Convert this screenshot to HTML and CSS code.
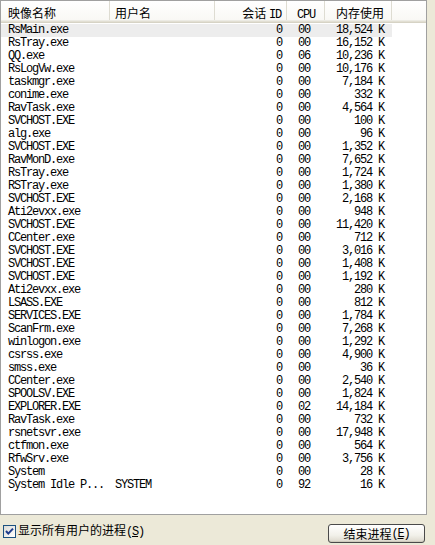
FILE: index.html
```html
<!DOCTYPE html>
<html>
<head>
<meta charset="utf-8">
<link rel="stylesheet" href="styles.css">
</head>
<body>
<div class="list">
  <div class="header">
    <div class="h h-name">映像名称</div>
    <div class="h h-user">用户名</div>
    <div class="h h-sess">会话 <span class="m">ID</span></div>
    <div class="h h-cpu"><span class="m">CPU</span></div>
    <div class="h h-mem">内存使用</div>
    <div class="h h-rest"></div>
  </div>
  <div class="rows m">
    <div class="row sel"><span class="name">RsMain.exe</span><span class="user"></span><span class="sess">0</span><span class="cpu">00</span><span class="mem">18,524 K</span></div>
    <div class="row"><span class="name">RsTray.exe</span><span class="user"></span><span class="sess">0</span><span class="cpu">00</span><span class="mem">16,152 K</span></div>
    <div class="row"><span class="name">QQ.exe</span><span class="user"></span><span class="sess">0</span><span class="cpu">06</span><span class="mem">10,236 K</span></div>
    <div class="row"><span class="name">RsLogVw.exe</span><span class="user"></span><span class="sess">0</span><span class="cpu">00</span><span class="mem">10,176 K</span></div>
    <div class="row"><span class="name">taskmgr.exe</span><span class="user"></span><span class="sess">0</span><span class="cpu">00</span><span class="mem">7,184 K</span></div>
    <div class="row"><span class="name">conime.exe</span><span class="user"></span><span class="sess">0</span><span class="cpu">00</span><span class="mem">332 K</span></div>
    <div class="row"><span class="name">RavTask.exe</span><span class="user"></span><span class="sess">0</span><span class="cpu">00</span><span class="mem">4,564 K</span></div>
    <div class="row"><span class="name">SVCHOST.EXE</span><span class="user"></span><span class="sess">0</span><span class="cpu">00</span><span class="mem">100 K</span></div>
    <div class="row"><span class="name">alg.exe</span><span class="user"></span><span class="sess">0</span><span class="cpu">00</span><span class="mem">96 K</span></div>
    <div class="row"><span class="name">SVCHOST.EXE</span><span class="user"></span><span class="sess">0</span><span class="cpu">00</span><span class="mem">1,352 K</span></div>
    <div class="row"><span class="name">RavMonD.exe</span><span class="user"></span><span class="sess">0</span><span class="cpu">00</span><span class="mem">7,652 K</span></div>
    <div class="row"><span class="name">RsTray.exe</span><span class="user"></span><span class="sess">0</span><span class="cpu">00</span><span class="mem">1,724 K</span></div>
    <div class="row"><span class="name">RSTray.exe</span><span class="user"></span><span class="sess">0</span><span class="cpu">00</span><span class="mem">1,380 K</span></div>
    <div class="row"><span class="name">SVCHOST.EXE</span><span class="user"></span><span class="sess">0</span><span class="cpu">00</span><span class="mem">2,168 K</span></div>
    <div class="row"><span class="name">Ati2evxx.exe</span><span class="user"></span><span class="sess">0</span><span class="cpu">00</span><span class="mem">948 K</span></div>
    <div class="row"><span class="name">SVCHOST.EXE</span><span class="user"></span><span class="sess">0</span><span class="cpu">00</span><span class="mem">11,420 K</span></div>
    <div class="row"><span class="name">CCenter.exe</span><span class="user"></span><span class="sess">0</span><span class="cpu">00</span><span class="mem">712 K</span></div>
    <div class="row"><span class="name">SVCHOST.EXE</span><span class="user"></span><span class="sess">0</span><span class="cpu">00</span><span class="mem">3,016 K</span></div>
    <div class="row"><span class="name">SVCHOST.EXE</span><span class="user"></span><span class="sess">0</span><span class="cpu">00</span><span class="mem">1,408 K</span></div>
    <div class="row"><span class="name">SVCHOST.EXE</span><span class="user"></span><span class="sess">0</span><span class="cpu">00</span><span class="mem">1,192 K</span></div>
    <div class="row"><span class="name">Ati2evxx.exe</span><span class="user"></span><span class="sess">0</span><span class="cpu">00</span><span class="mem">280 K</span></div>
    <div class="row"><span class="name">LSASS.EXE</span><span class="user"></span><span class="sess">0</span><span class="cpu">00</span><span class="mem">812 K</span></div>
    <div class="row"><span class="name">SERVICES.EXE</span><span class="user"></span><span class="sess">0</span><span class="cpu">00</span><span class="mem">1,784 K</span></div>
    <div class="row"><span class="name">ScanFrm.exe</span><span class="user"></span><span class="sess">0</span><span class="cpu">00</span><span class="mem">7,268 K</span></div>
    <div class="row"><span class="name">winlogon.exe</span><span class="user"></span><span class="sess">0</span><span class="cpu">00</span><span class="mem">1,292 K</span></div>
    <div class="row"><span class="name">csrss.exe</span><span class="user"></span><span class="sess">0</span><span class="cpu">00</span><span class="mem">4,900 K</span></div>
    <div class="row"><span class="name">smss.exe</span><span class="user"></span><span class="sess">0</span><span class="cpu">00</span><span class="mem">36 K</span></div>
    <div class="row"><span class="name">CCenter.exe</span><span class="user"></span><span class="sess">0</span><span class="cpu">00</span><span class="mem">2,540 K</span></div>
    <div class="row"><span class="name">SPOOLSV.EXE</span><span class="user"></span><span class="sess">0</span><span class="cpu">00</span><span class="mem">1,824 K</span></div>
    <div class="row"><span class="name">EXPLORER.EXE</span><span class="user"></span><span class="sess">0</span><span class="cpu">02</span><span class="mem">14,184 K</span></div>
    <div class="row"><span class="name">RavTask.exe</span><span class="user"></span><span class="sess">0</span><span class="cpu">00</span><span class="mem">732 K</span></div>
    <div class="row"><span class="name">rsnetsvr.exe</span><span class="user"></span><span class="sess">0</span><span class="cpu">00</span><span class="mem">17,948 K</span></div>
    <div class="row"><span class="name">ctfmon.exe</span><span class="user"></span><span class="sess">0</span><span class="cpu">00</span><span class="mem">564 K</span></div>
    <div class="row"><span class="name">RfwSrv.exe</span><span class="user"></span><span class="sess">0</span><span class="cpu">00</span><span class="mem">3,756 K</span></div>
    <div class="row"><span class="name">System</span><span class="user"></span><span class="sess">0</span><span class="cpu">00</span><span class="mem">28 K</span></div>
    <div class="row"><span class="name">System Idle P...</span><span class="user">SYSTEM</span><span class="sess">0</span><span class="cpu">92</span><span class="mem">16 K</span></div>
  </div>
</div>
<div class="footer">
  <label class="chk">
    <span class="box"><svg width="11" height="11" viewBox="0 0 11 11"><polyline points="2,5 4.3,7.6 9,2.6" fill="none" stroke="#1e3c8c" stroke-width="2"/></svg></span>
    <span class="lbl">显示所有用户的进程<span class="m">(<u>S</u>)</span></span>
  </label>
  <button class="btn">结束进程<span class="m">(<u>E</u>)</span></button>
</div>
</body>
</html>
```

FILE: styles.css
```css
html, body {
  margin: 0;
  padding: 0;
}
body {
  width: 435px;
  height: 545px;
  background: #ece9d8;
  font-family: "Noto Sans CJK SC", sans-serif;
  font-size: 12px;
  color: #000;
  overflow: hidden;
}
.m {
  font-family: "Liberation Mono", "Noto Sans CJK SC", monospace;
  font-size: 12px;
  letter-spacing: -1.2px;
}
.list {
  width: 427px;
  height: 515px;
  box-sizing: border-box;
  border: 1px solid #a0a0a0;
  background: #fff;
  overflow: hidden;
}
.header {
  display: grid;
  grid-template-columns: 109px 105px 72px 38px 67px 1fr;
  height: 22px;
  background: linear-gradient(#ffffff, #f8f7f3);
  box-shadow: inset 0 -1px #d6d3c5, inset 0 -2px #e2dfd3, inset 0 -3px #ecebe4;
}
.h {
  box-sizing: border-box;
  padding-top: 4px;
  line-height: 16px;
  height: 19px;
  white-space: nowrap;
  border-right: 1px solid #dedcd2;
}
.h-name { padding-left: 7px; }
.h-user { padding-left: 5px; }
.h-sess { text-align: right; padding-right: 5px; }
.h-cpu { padding-left: 10px; }
.h-mem { padding-left: 11px; }
.h-rest { border-right: none; }
.rows {
  display: flex;
  flex-direction: column;
  padding-top: 1px;
}
.row {
  display: grid;
  grid-template-columns: 109px 105px 72px 38px 67px;
  width: 391px;
  height: 13px;
  line-height: 13px;
  white-space: nowrap;
}
.row.sel { background: #ededed; }
.name { padding-left: 7px; }
.user { padding-left: 5px; }
.sess { text-align: right; padding-right: 5px; }
.cpu { padding-left: 11px; }
.mem { text-align: right; padding-right: 8px; }
.footer {
  display: flex;
  align-items: flex-start;
  padding-top: 9px;
}
.chk {
  display: flex;
  align-items: center;
  gap: 2px;
  margin-left: 3px;
  height: 14px;
}
.box {
  width: 13px;
  height: 13px;
  box-sizing: border-box;
  border: 1px solid #1c5180;
  background: linear-gradient(135deg, #dcdcd7, #ffffff);
  display: flex;
  align-items: center;
  justify-content: center;
}
.lbl {
  line-height: 14px;
  white-space: nowrap;
}
.btn {
  margin-left: auto;
  margin-right: 10px;
  width: 97px;
  height: 19px;
  box-sizing: border-box;
  border: 1px solid #4a4a4a;
  border-radius: 3px;
  background: linear-gradient(#ffffff, #f2f1ea 60%, #dcd8cc);
  box-shadow: inset 0 -1px #cfcbbd;
  font-family: "Noto Sans CJK SC", sans-serif;
  font-size: 12px;
  color: #000;
  padding: 0;
  display: flex;
  align-items: center;
  justify-content: center;
  line-height: 14px;
}
```
